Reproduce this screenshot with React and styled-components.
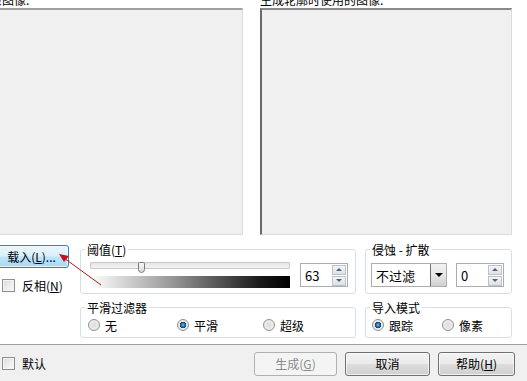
import React from 'react'
import styled, { createGlobalStyle } from 'styled-components'

const Global = createGlobalStyle`
  html, body {
    margin: 0;
    padding: 0;
    background: #ffffff;
    overflow: hidden;
  }
  body {
    font-family: "Noto Sans CJK SC", "Noto Sans", sans-serif;
    font-size: 12px;
    color: #000;
  }
`

const Screen = styled.div`
  position: relative;
  width: 527px;
  height: 381px;
  overflow: hidden;
`

const Dialog = styled.div`
  width: 533px;
  margin-left: -6px;
  display: flex;
  flex-direction: column;
`

const Top = styled.div`
  display: grid;
  grid-template-columns: 249px 252px;
  column-gap: 17px;
  margin-top: -8px;
`

const Caption = styled.div`
  height: 16px;
  line-height: 16px;
  white-space: nowrap;
  margin-left: ${p => p.$shift || 0}px;
`

const Preview = styled.div`
  height: 224px;
  background: #f0f0f0;
  border: 1px solid #dcdcdc;
  border-top: 2px solid ${p => (p.$sunken ? '#8a8a8a' : '#a0a0a0')};
  border-left: 2px solid ${p => (p.$sunken ? '#6a6a6a' : '#dcdcdc')};
`

const Middle = styled.div`
  display: flex;
  height: 109px;
`

const Side = styled.div`
  width: 86px;
  display: flex;
  flex-direction: column;
  padding-top: 10px;
`

const Button = styled.button`
  box-sizing: border-box;
  font-family: inherit;
  font-size: 12px;
  height: ${p => p.$h || 24}px;
  width: ${p => p.$w || 85}px;
  padding: 0;
  border-radius: 3px;
  border: 1px solid #707070;
  color: #000;
  background: linear-gradient(#f2f2f2 0%, #ebebeb 48%, #dddddd 52%, #cfcfcf 100%);
  box-shadow: inset 0 0 0 1px rgba(255, 255, 255, 0.7);

  &.hot {
    border-color: #3c7fb1;
    background: linear-gradient(#eaf6fd 0%, #d9f0fc 48%, #bee6fd 52%, #a7d9f5 100%);
  }
  &:disabled {
    border-color: #adb2b5;
    background: #f4f4f4;
    color: #8a8a8a;
    box-shadow: none;
  }
`

const Check = styled.label`
  display: flex;
  align-items: center;
  gap: 7px;
  white-space: nowrap;
  margin-left: ${p => p.$ml || 0}px;
  margin-top: ${p => p.$mt || 0}px;

  &::before {
    content: '';
    box-sizing: border-box;
    width: 13px;
    height: 13px;
    border: 1px solid #8e8f8f;
    background: linear-gradient(135deg, #dcdcdc, #fbfbfb);
    box-shadow: inset 0 0 0 1px #f4f4f4;
  }
`

const Groups = styled.div`
  display: grid;
  grid-template-columns: 276px 147px;
  grid-template-rows: 52px 38px;
  column-gap: 9px;
  row-gap: 6px;
  margin-top: 7px;
`

const Group = styled.fieldset`
  margin: 0;
  min-width: 0;
  border: 1px solid #d5dfe5;
  border-radius: 3px;
  padding: 0;
`

const Legend = styled.legend`
  padding: 0 2px;
  margin-left: 4px;
  line-height: 15px;
  font-size: 12px;
`

const Body = styled.div`
  display: flex;
  align-items: ${p => (p.$center ? 'center' : 'flex-start')};
  height: 100%;
  padding-left: ${p => p.$pl || 6}px;
`

const SliderCol = styled.div`
  width: 200px;
  display: flex;
  flex-direction: column;
  margin-top: 5px;
`

const Track = styled.div`
  position: relative;
  height: 7px;
  box-sizing: border-box;
  border: 1px solid #c8c8c8;
  border-radius: 1px;
  background: linear-gradient(#e6e6e6, #f2f2f2);
`

const Thumb = styled.div`
  position: absolute;
  left: 47px;
  top: -1px;
  width: 7px;
  height: 11px;
  box-sizing: border-box;
  border: 1px solid #7b7b7b;
  border-radius: 2px 2px 4px 4px;
  background: linear-gradient(#fafafa, #d8d8d8);
`

const Ramp = styled.div`
  height: 12px;
  margin-top: 7px;
  background: linear-gradient(to right, #ffffff 0%, #9a9a9a 40%, #1a1a1a 85%, #000 100%);
`

const Spin = styled.div`
  box-sizing: border-box;
  width: ${p => p.$w || 48}px;
  height: 24px;
  margin-left: ${p => p.$ml || 0}px;
  margin-top: 6px;
  border: 1px solid #abadb3;
  display: flex;
  align-items: center;
  justify-content: space-between;
  padding: 0 1px 0 4px;
  font-size: 13px;
  background: #fff;
`

const Arrows = styled.div`
  display: flex;
  flex-direction: column;
  gap: 1px;
`

const Arrow = styled.div`
  box-sizing: border-box;
  width: 14px;
  height: 10px;
  border: 1px solid #b8c3cf;
  background: linear-gradient(#f5f5f5, #e0e0e0);
  display: flex;
  align-items: center;
  justify-content: center;

  &::after {
    content: '';
    border-left: 3px solid transparent;
    border-right: 3px solid transparent;
    ${p => (p.$down ? 'border-top: 3px solid #4d6185;' : 'border-bottom: 3px solid #4d6185;')}
  }
`

const Combo = styled.div`
  box-sizing: border-box;
  width: 76px;
  height: 24px;
  margin-top: 6px;
  border: 1px solid #abadb3;
  display: flex;
  align-items: center;
  padding-left: 4px;
  font-size: 13px;
  background: #fff;
`

const Drop = styled.div`
  margin-left: auto;
  width: 16px;
  height: 22px;
  box-sizing: border-box;
  border-left: 1px solid #707070;
  background: linear-gradient(#f2f2f2 0%, #e6e6e6 50%, #d0d0d0 100%);
  display: flex;
  align-items: center;
  justify-content: center;

  &::after {
    content: '';
    border-left: 4px solid transparent;
    border-right: 4px solid transparent;
    border-top: 4px solid #000;
  }
`

const Radio = styled.label`
  width: ${p => p.$w}px;
  display: flex;
  align-items: center;
  gap: 5px;
  white-space: nowrap;
  margin-top: -2px;

  &::before {
    content: '';
    box-sizing: border-box;
    width: 12px;
    height: 12px;
    border-radius: 50%;
    border: 1px solid #8e8f8f;
    background: ${p =>
      p.$on
        ? 'radial-gradient(circle, #7fc0ee 0, #2167a8 2px, #123e6e 3px, #e6e6e6 3.5px, #f8f8f8 100%)'
        : 'radial-gradient(circle, #dcdcdc 0, #f6f6f6 100%)'};
  }
`

const Bottom = styled.div`
  height: 37px;
  background: #f0f0f0;
  border-top: 1px solid #a0a0a0;
  display: flex;
  align-items: center;
  padding: 0 12px 0 8px;
`

const Actions = styled.div`
  margin-left: auto;
  display: flex;
  gap: 8px;
`

const Note = styled.svg`
  position: absolute;
  left: 0;
  top: 0;
  pointer-events: none;
`

export default function App() {
  return (
    <Screen>
      <Global />
      <Dialog>
        <Top>
          <div>
            <Caption $shift={-4}>原图像.</Caption>
            <Preview />
          </div>
          <div>
            <Caption>生成轮廓时使用的图像.</Caption>
            <Preview $sunken />
          </div>
        </Top>
        <Middle>
          <Side>
            <Button className="hot" $w={75} $h={23}>
              载入(<u>L</u>)...
            </Button>
            <Check $ml={8} $mt={9}>
              <span>
                反相(<u>N</u>)
              </span>
            </Check>
          </Side>
          <Groups>
            <Group>
              <Legend>
                阈值(<u>T</u>)
              </Legend>
              <Body $pl={9}>
                <SliderCol>
                  <Track>
                    <Thumb />
                  </Track>
                  <Ramp />
                </SliderCol>
                <Spin $ml={10}>
                  63
                  <Arrows>
                    <Arrow />
                    <Arrow $down />
                  </Arrows>
                </Spin>
              </Body>
            </Group>
            <Group>
              <Legend>侵蚀 - 扩散</Legend>
              <Body $pl={5}>
                <Combo>
                  不过滤
                  <Drop />
                </Combo>
                <Spin $ml={9}>
                  0
                  <Arrows>
                    <Arrow />
                    <Arrow $down />
                  </Arrows>
                </Spin>
              </Body>
            </Group>
            <Group>
              <Legend>平滑过滤器</Legend>
              <Body $pl={7} $center>
                <Radio $w={89}>无</Radio>
                <Radio $w={86} $on>
                  平滑
                </Radio>
                <Radio $w={60}>超级</Radio>
              </Body>
            </Group>
            <Group>
              <Legend>导入模式</Legend>
              <Body $pl={6} $center>
                <Radio $w={70} $on>
                  跟踪
                </Radio>
                <Radio $w={60}>像素</Radio>
              </Body>
            </Group>
          </Groups>
        </Middle>
        <Bottom>
          <Check>
            <span>默认</span>
          </Check>
          <Actions>
            <Button disabled $w={83}>
              生成(<u>G</u>)
            </Button>
            <Button $w={85}>取消</Button>
            <Button $w={77}>
              帮助(<u>H</u>)
            </Button>
          </Actions>
        </Bottom>
      </Dialog>
      <Note width="527" height="381" viewBox="0 0 527 381">
        <line x1="101" y1="285" x2="64" y2="258" stroke="#b01818" strokeWidth="1" />
        <polygon points="59,254 69,256 64,262" fill="#c8101c" />
      </Note>
    </Screen>
  )
}
